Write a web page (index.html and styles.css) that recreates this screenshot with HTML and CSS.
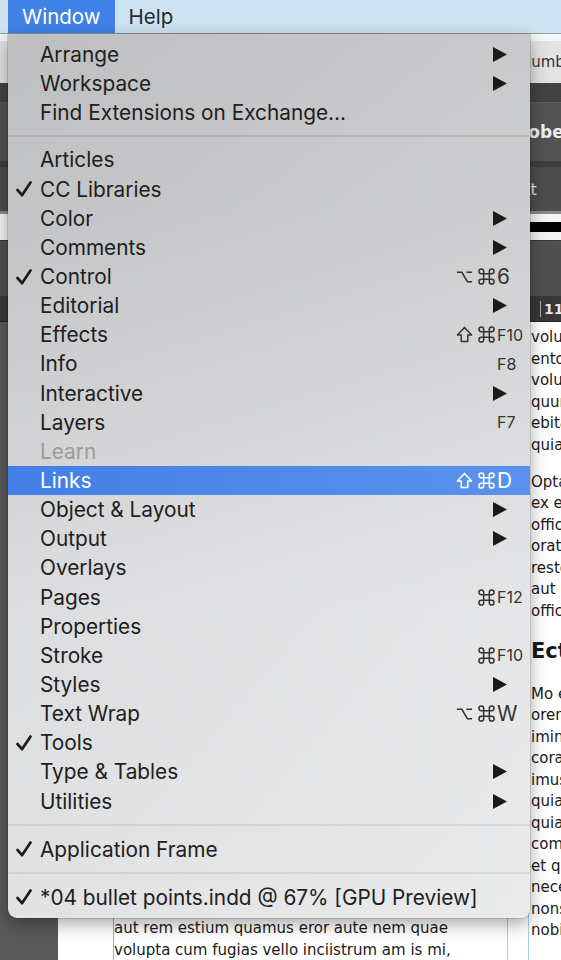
FILE: index.html
```html
<!DOCTYPE html>
<html lang="en">
<head>
    <meta charset="UTF-8">
    <meta name="viewport" content="width=device-width, initial-scale=1.0">
    <title>Window menu</title>
    <link rel="stylesheet" href="styles.css">
</head>
<body>
    <div class="menubar">
        <div class="menubar-item active">Window</div>
        <div class="menubar-item">Help</div>
    </div>

    <div class="workspace">
        <div class="panels">
            <div class="panel-row row-top"></div>
            <div class="panel-row row-light"><span class="panel-text dark-text">Numbers</span></div>
            <div class="panel-row row-dark1"></div>
            <div class="panel-row row-dark2"><span class="panel-text bold-text">Adobe</span></div>
            <div class="panel-row row-line"></div>
            <div class="panel-row row-dark3"><span class="panel-text light-text">Kt</span></div>
            <div class="panel-row row-stroke"><div class="stroke-bar"></div></div>
            <div class="panel-row row-dark4"></div>
            <div class="panel-row row-ruler"><span class="ruler-num">11</span></div>
        </div>

        <div class="doc-area">
            <div class="pasteboard"></div>
            <div class="page">
                <div class="column col-one">
                    <p>
                        <span class="line">ut ea nost harum qui ommolup tatiae</span>
                        <span class="line">aut rem estium quamus eror aute nem quae</span>
                        <span class="line">volupta cum fugias vello inciistrum am is mi,</span>
                    </p>
                </div>
                <div class="column col-two">
                    <p>
                        <span class="line">voluptatem</span>
                        <span class="line">entotatur</span>
                        <span class="line">voluptatur</span>
                        <span class="line">quuntibus</span>
                        <span class="line">ebitatus</span>
                        <span class="line">quiatem.</span>
                    </p>
                    <p>
                        <span class="line">Optatur</span>
                        <span class="line">ex eos</span>
                        <span class="line">officiis</span>
                        <span class="line">oratur</span>
                        <span class="line">restorum</span>
                        <span class="line">aut pro</span>
                        <span class="line">officia.</span>
                    </p>
                    <h2>Ecte</h2>
                    <p>
                        <span class="line">Mo eos</span>
                        <span class="line">orenim</span>
                        <span class="line">iminctur</span>
                        <span class="line">corae</span>
                        <span class="line">imusam</span>
                        <span class="line">quiatur</span>
                        <span class="line">quiam</span>
                        <span class="line">commodi</span>
                        <span class="line">et qui</span>
                        <span class="line">necessit</span>
                        <span class="line">nonsequ</span>
                        <span class="line">nobitat</span>
                    </p>
                </div>
            </div>
        </div>
    </div>

    <div class="menu">
        <div class="item"><span class="check"></span><span class="label">Arrange</span><span class="mods"></span><span class="key"><svg class="arrow" viewBox="0 0 14 15"><polygon points="0,0 14,7.5 0,15"/></svg></span></div>
        <div class="item"><span class="check"></span><span class="label">Workspace</span><span class="mods"></span><span class="key"><svg class="arrow" viewBox="0 0 14 15"><polygon points="0,0 14,7.5 0,15"/></svg></span></div>
        <div class="item"><span class="check"></span><span class="label">Find Extensions on Exchange...</span><span class="mods"></span><span class="key"></span></div>
        <div class="separator"></div>
        <div class="item"><span class="check"></span><span class="label">Articles</span><span class="mods"></span><span class="key"></span></div>
        <div class="item"><span class="check"><svg viewBox="0 0 16 16"><path d="M1.5 9 L6 14.2 L14.5 1.5"/></svg></span><span class="label">CC Libraries</span><span class="mods"></span><span class="key"></span></div>
        <div class="item"><span class="check"></span><span class="label">Color</span><span class="mods"></span><span class="key"><svg class="arrow" viewBox="0 0 14 15"><polygon points="0,0 14,7.5 0,15"/></svg></span></div>
        <div class="item"><span class="check"></span><span class="label">Comments</span><span class="mods"></span><span class="key"><svg class="arrow" viewBox="0 0 14 15"><polygon points="0,0 14,7.5 0,15"/></svg></span></div>
        <div class="item"><span class="check"><svg viewBox="0 0 16 16"><path d="M1.5 9 L6 14.2 L14.5 1.5"/></svg></span><span class="label">Control</span>
            <span class="mods"><svg class="mod" viewBox="0 0 18 18"><path d="M1 4.5H6.2L12 14.5H17M11 4.5H17"/></svg><svg class="mod" viewBox="0 0 18 18"><path d="M6 6V3.5A2.5 2.5 0 1 0 3.5 6H14.5A2.5 2.5 0 1 0 12 3.5V14.5A2.5 2.5 0 1 0 14.5 12H3.5A2.5 2.5 0 1 0 6 14.5Z"/></svg></span><span class="key">6</span></div>
        <div class="item"><span class="check"></span><span class="label">Editorial</span><span class="mods"></span><span class="key"><svg class="arrow" viewBox="0 0 14 15"><polygon points="0,0 14,7.5 0,15"/></svg></span></div>
        <div class="item"><span class="check"></span><span class="label">Effects</span>
            <span class="mods"><svg class="mod" viewBox="0 0 18 18"><path d="M9 1.5L16.5 9.5H12.5V16.5H5.5V9.5H1.5Z"/></svg><svg class="mod" viewBox="0 0 18 18"><path d="M6 6V3.5A2.5 2.5 0 1 0 3.5 6H14.5A2.5 2.5 0 1 0 12 3.5V14.5A2.5 2.5 0 1 0 14.5 12H3.5A2.5 2.5 0 1 0 6 14.5Z"/></svg></span><span class="key fkey">F10</span></div>
        <div class="item"><span class="check"></span><span class="label">Info</span><span class="mods"></span><span class="key fkey">F8</span></div>
        <div class="item"><span class="check"></span><span class="label">Interactive</span><span class="mods"></span><span class="key"><svg class="arrow" viewBox="0 0 14 15"><polygon points="0,0 14,7.5 0,15"/></svg></span></div>
        <div class="item"><span class="check"></span><span class="label">Layers</span><span class="mods"></span><span class="key fkey">F7</span></div>
        <div class="item disabled"><span class="check"></span><span class="label">Learn</span><span class="mods"></span><span class="key"></span></div>
        <div class="item selected"><span class="check"></span><span class="label">Links</span>
            <span class="mods"><svg class="mod" viewBox="0 0 18 18"><path d="M9 1.5L16.5 9.5H12.5V16.5H5.5V9.5H1.5Z"/></svg><svg class="mod" viewBox="0 0 18 18"><path d="M6 6V3.5A2.5 2.5 0 1 0 3.5 6H14.5A2.5 2.5 0 1 0 12 3.5V14.5A2.5 2.5 0 1 0 14.5 12H3.5A2.5 2.5 0 1 0 6 14.5Z"/></svg></span><span class="key">D</span></div>
        <div class="item"><span class="check"></span><span class="label">Object &amp; Layout</span><span class="mods"></span><span class="key"><svg class="arrow" viewBox="0 0 14 15"><polygon points="0,0 14,7.5 0,15"/></svg></span></div>
        <div class="item"><span class="check"></span><span class="label">Output</span><span class="mods"></span><span class="key"><svg class="arrow" viewBox="0 0 14 15"><polygon points="0,0 14,7.5 0,15"/></svg></span></div>
        <div class="item"><span class="check"></span><span class="label">Overlays</span><span class="mods"></span><span class="key"></span></div>
        <div class="item"><span class="check"></span><span class="label">Pages</span>
            <span class="mods"><svg class="mod" viewBox="0 0 18 18"><path d="M6 6V3.5A2.5 2.5 0 1 0 3.5 6H14.5A2.5 2.5 0 1 0 12 3.5V14.5A2.5 2.5 0 1 0 14.5 12H3.5A2.5 2.5 0 1 0 6 14.5Z"/></svg></span><span class="key fkey">F12</span></div>
        <div class="item"><span class="check"></span><span class="label">Properties</span><span class="mods"></span><span class="key"></span></div>
        <div class="item"><span class="check"></span><span class="label">Stroke</span>
            <span class="mods"><svg class="mod" viewBox="0 0 18 18"><path d="M6 6V3.5A2.5 2.5 0 1 0 3.5 6H14.5A2.5 2.5 0 1 0 12 3.5V14.5A2.5 2.5 0 1 0 14.5 12H3.5A2.5 2.5 0 1 0 6 14.5Z"/></svg></span><span class="key fkey">F10</span></div>
        <div class="item"><span class="check"></span><span class="label">Styles</span><span class="mods"></span><span class="key"><svg class="arrow" viewBox="0 0 14 15"><polygon points="0,0 14,7.5 0,15"/></svg></span></div>
        <div class="item"><span class="check"></span><span class="label">Text Wrap</span>
            <span class="mods"><svg class="mod" viewBox="0 0 18 18"><path d="M1 4.5H6.2L12 14.5H17M11 4.5H17"/></svg><svg class="mod" viewBox="0 0 18 18"><path d="M6 6V3.5A2.5 2.5 0 1 0 3.5 6H14.5A2.5 2.5 0 1 0 12 3.5V14.5A2.5 2.5 0 1 0 14.5 12H3.5A2.5 2.5 0 1 0 6 14.5Z"/></svg></span><span class="key">W</span></div>
        <div class="item"><span class="check"><svg viewBox="0 0 16 16"><path d="M1.5 9 L6 14.2 L14.5 1.5"/></svg></span><span class="label">Tools</span><span class="mods"></span><span class="key"></span></div>
        <div class="item"><span class="check"></span><span class="label">Type &amp; Tables</span><span class="mods"></span><span class="key"><svg class="arrow" viewBox="0 0 14 15"><polygon points="0,0 14,7.5 0,15"/></svg></span></div>
        <div class="item"><span class="check"></span><span class="label">Utilities</span><span class="mods"></span><span class="key"><svg class="arrow" viewBox="0 0 14 15"><polygon points="0,0 14,7.5 0,15"/></svg></span></div>
        <div class="separator sep-low"></div>
        <div class="item"><span class="check"><svg viewBox="0 0 16 16"><path d="M1.5 9 L6 14.2 L14.5 1.5"/></svg></span><span class="label">Application Frame</span><span class="mods"></span><span class="key"></span></div>
        <div class="separator sep-low"></div>
        <div class="item"><span class="check"><svg viewBox="0 0 16 16"><path d="M1.5 9 L6 14.2 L14.5 1.5"/></svg></span><span class="label">*04 bullet points.indd @ 67% [GPU Preview]</span><span class="mods"></span><span class="key"></span></div>
    </div>
</body>
</html>
```

FILE: styles.css
```css
body {
    margin: 0;
    width: 561px;
    height: 960px;
    overflow: hidden;
    background-color: #585858;
    font-family: Inter, "Noto Sans", sans-serif;
}

/* top menu bar */
.menubar {
    height: 33px;
    display: flex;
    background-color: #cee3f1;
    border-bottom: 1px solid #95a3ac;
    padding-left: 8px;
}
.menubar-item {
    font-size: 20.5px;
    line-height: 33px;
    padding: 0 14px 0 14px;
    color: #1f2b33;
}
.menubar-item.active {
    background-color: #4082e6;
    color: white;
}

/* application behind the menu */
.workspace {
    display: flex;
    flex-direction: column;
}
.panel-row {
    display: flex;
    align-items: center;
    overflow: hidden;
    font-family: "DejaVu Sans", sans-serif;
    font-size: 15px;
}
.panel-text {
    padding-left: 520px;
    white-space: nowrap;
}
.row-top { height: 7px; background-color: #f2f4f5; }
.row-light { height: 42px; background-color: #e3e3e3; }
.row-dark1 { height: 19px; background-color: #434343; border-bottom: 1px solid #5c5c5c; }
.row-dark2 { height: 58px; background-color: #535353; }
.row-line { height: 6px; background-color: #3e3e3e; }
.row-dark3 { height: 44px; background-color: #4d4d4d; }
.row-stroke {
    height: 26px;
    background-color: #f4f4f4;
    border-top: 3px solid #8a8a8a;
}
.stroke-bar {
    margin-left: 520px;
    width: 41px;
    height: 10px;
    background-color: #000;
}
.row-dark4 { height: 55px; background-color: #505050; border-top: 1px solid #3a3a3a; }
.row-ruler {
    height: 25px;
    background-color: #383838;
    border-bottom: 1px solid #222;
}
.dark-text { color: #333; }
.bold-text { color: #f0f0f0; font-weight: bold; font-size: 17px; padding-left: 503px; }
.light-text { color: #e8e8e8; font-size: 16px; padding-left: 520px; }
.ruler-num {
    margin-left: 540px;
    padding-left: 3px;
    color: #e6e6e6;
    font-size: 14px;
    font-weight: bold;
    border-left: 1px solid #aaa;
}

.doc-area {
    display: flex;
    height: 645px;
}
.pasteboard {
    flex-shrink: 0;
    width: 58px;
    background-color: #595959;
}
.page {
    flex: 1;
    min-width: 0;
    display: flex;
    background-color: #fff;
    font-family: "DejaVu Sans", sans-serif;
    font-size: 15px;
    line-height: 21.5px;
    color: #1a1a1a;
}
.column p {
    margin: 0 0 15.6px;
}
.line {
    display: block;
    white-space: nowrap;
}
.col-one {
    flex-shrink: 0;
    width: 393px;
    margin-left: 55px;
    display: flex;
    flex-direction: column;
    justify-content: flex-end;
    border-left: 1px solid #b79be6;
    border-right: 1px solid #a9cbf2;
    overflow: hidden;
}
.col-one p {
    margin: 0 0 6px;
}
.col-two {
    flex: 1;
    min-width: 0;
    margin-left: 20px;
    padding-left: 2px;
    padding-top: 5px;
    border-left: 1px solid #a9cbf2;
    overflow: hidden;
}
.col-two h2 {
    margin: 10px 0 20px;
    font-size: 21px;
    line-height: 26px;
}

/* the open Window menu */
.menu {
    position: absolute;
    left: 8px;
    top: 34px;
    width: 522px;
    padding: 6px 0 6px;
    border-radius: 0 0 9px 9px;
    background:
        linear-gradient(to right, rgba(0, 0, 0, 0.03), rgba(255, 255, 255, 0.08)),
        linear-gradient(to bottom, #c4c5c7 0%, #c9cacc 20%, #d6d7d9 42%, #e3e4e6 65%, #e8e9ea 100%);
    box-shadow: 0 6px 18px rgba(0, 0, 0, 0.35), 0 0 0 1px rgba(0, 0, 0, 0.12);
    color: #202020;
}
.item {
    display: grid;
    grid-template-columns: 32px 1fr auto 33px;
    align-items: center;
    height: 29.15px;
    font-size: 20.8px;
}
.check svg {
    display: block;
    width: 16px;
    height: 16px;
    margin-left: 8px;
    fill: none;
    stroke: #1c1c1c;
    stroke-width: 2.7;
    stroke-linecap: round;
    stroke-linejoin: round;
}
.label {
    white-space: nowrap;
}
.mods {
    display: flex;
    gap: 5px;
    justify-content: flex-end;
    padding-right: 2px;
}
.mod {
    width: 17px;
    height: 17px;
    fill: none;
    stroke: #343434;
    stroke-width: 1.6;
    stroke-linejoin: round;
}
.key {
    color: #343434;
    font-size: 20.8px;
}
.fkey {
    font-size: 16px;
}
.arrow {
    display: block;
    width: 14px;
    height: 15px;
    margin-left: -4px;
    fill: #1b1b1b;
}
.disabled .label {
    color: #9b9b9b;
}
.selected {
    background: linear-gradient(to right, #437fe6, #5b92ed);
    color: #fff;
}
.selected .key {
    color: #fff;
}
.selected .mod {
    stroke: #fff;
}
.separator {
    height: 2px;
    margin: 8px 0;
    background-color: rgba(0, 0, 0, 0.08);
}
.sep-low {
    margin: 8.5px 0;
}
```
